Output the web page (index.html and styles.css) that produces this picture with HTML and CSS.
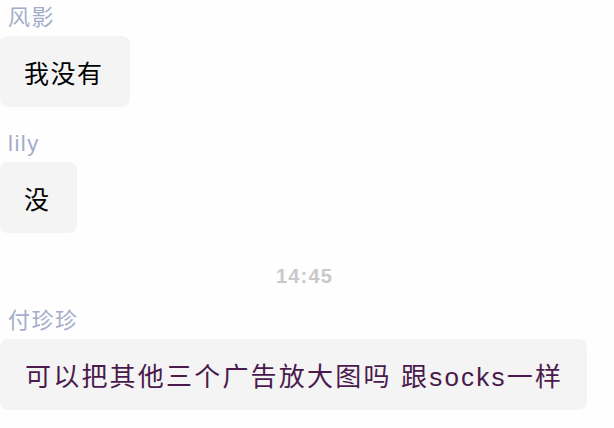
FILE: index.html
```html
<!DOCTYPE html>
<html lang="zh">
<head>
<meta charset="utf-8">
<title>Chat</title>
<link rel="stylesheet" href="styles.css">
</head>
<body>
<div class="chat">
  <div class="msg">
    <div class="name">风影</div>
    <div class="bubble">我没有</div>
  </div>
  <div class="msg">
    <div class="name">lily</div>
    <div class="bubble">没</div>
  </div>
  <div class="time">14:45</div>
  <div class="msg">
    <div class="name">付珍珍</div>
    <div class="bubble bubble-wide">可以把其他三个广告放大图吗 跟socks一样</div>
  </div>
</div>
</body>
</html>
```

FILE: styles.css
```css
html, body {
  margin: 0;
  padding: 0;
  background: #fefefe;
}
body {
  font-family: "Liberation Sans", "Noto Sans CJK SC", sans-serif;
  width: 614px;
  height: 428px;
  overflow: hidden;
}
.chat {
  display: flex;
  flex-direction: column;
  padding-top: 5px;
}
.msg {
  display: flex;
  flex-direction: column;
  align-items: flex-start;
  gap: 5px;
  margin-bottom: 24px;
}
.name {
  font-size: 22px;
  line-height: 26px;
  letter-spacing: 1.5px;
  color: #a3adca;
  padding-left: 8px;
}
.bubble {
  background: #f4f4f4;
  border-radius: 8px;
  height: 71px;
  display: flex;
  align-items: center;
  padding: 0 26px 0 24px;
  font-size: 25px;
  letter-spacing: 1.5px;
  color: #000;
  box-sizing: border-box;
}
.bubble-wide {
  font-size: 26px;
  letter-spacing: 2.2px;
  color: #4a1a4c;
  padding-left: 25px;
  padding-right: 24px;
}
.time {
  text-align: center;
  width: 609px;
  font-size: 20px;
  font-weight: bold;
  letter-spacing: 1.2px;
  line-height: 26px;
  color: #c9c9c9;
  margin-top: 6px;
  margin-bottom: 19px;
}
```
